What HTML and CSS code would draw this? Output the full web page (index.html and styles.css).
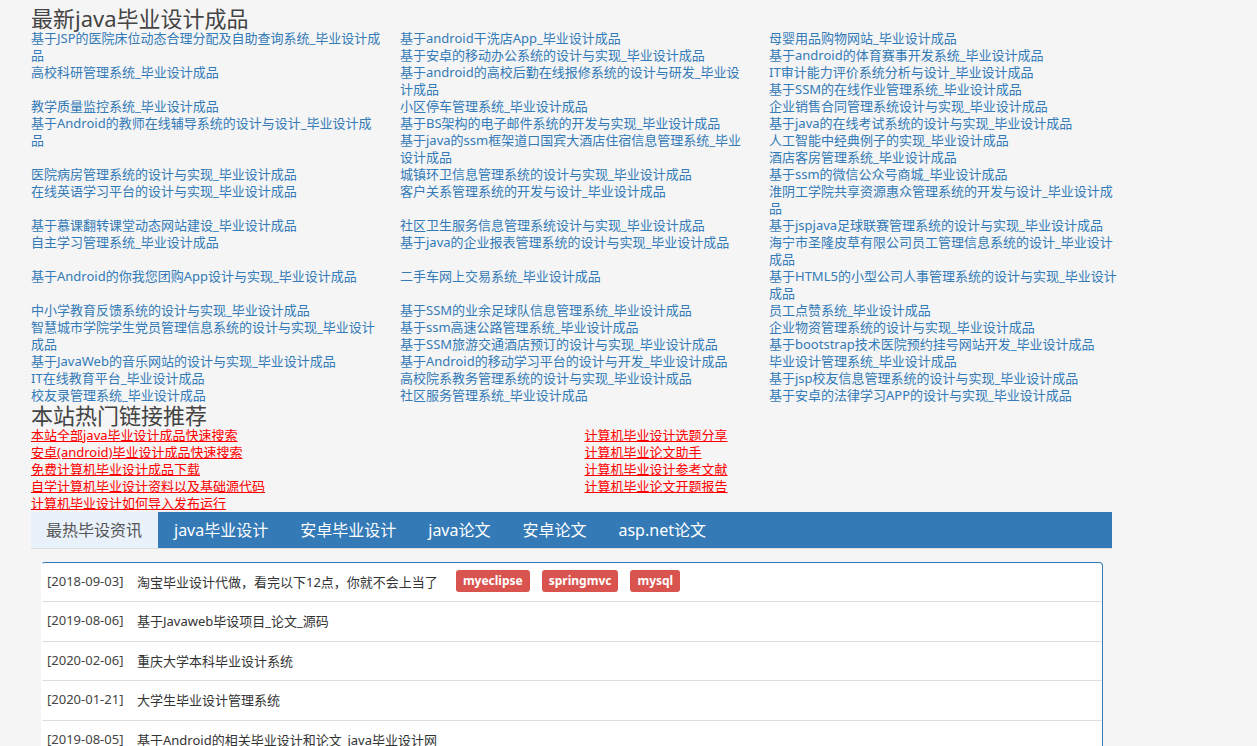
FILE: index.html
```html
<!DOCTYPE html>
<html lang="zh-CN">
<head>
<meta charset="utf-8">
<title>java毕业设计</title>
<link rel="stylesheet" href="styles.css">
</head>
<body>
<main class="container">
  <section>
    <h3 class="heading">最新java毕业设计成品</h3>
    <ul class="row thirds">
      <li><a href="#">基于JSP的医院床位动态合理分配及自助查询系统_毕业设计成<br>品</a></li>
      <li><a href="#">基于android干洗店App_毕业设计成品</a></li>
      <li><a href="#">母婴用品购物网站_毕业设计成品</a></li>
      <li><a href="#">基于安卓的移动办公系统的设计与实现_毕业设计成品</a></li>
      <li><a href="#">基于android的体育赛事开发系统_毕业设计成品</a></li>
      <li><a href="#">高校科研管理系统_毕业设计成品</a></li>
      <li><a href="#">基于android的高校后勤在线报修系统的设计与研发_毕业设<br>计成品</a></li>
      <li><a href="#">IT审计能力评价系统分析与设计_毕业设计成品</a></li>
      <li><a href="#">基于SSM的在线作业管理系统_毕业设计成品</a></li>
      <li><a href="#">教学质量监控系统_毕业设计成品</a></li>
      <li><a href="#">小区停车管理系统_毕业设计成品</a></li>
      <li><a href="#">企业销售合同管理系统设计与实现_毕业设计成品</a></li>
      <li><a href="#">基于Android的教师在线辅导系统的设计与设计_毕业设计成<br>品</a></li>
      <li><a href="#">基于BS架构的电子邮件系统的开发与实现_毕业设计成品</a></li>
      <li><a href="#">基于java的在线考试系统的设计与实现_毕业设计成品</a></li>
      <li><a href="#">基于java的ssm框架道口国宾大酒店住宿信息管理系统_毕业<br>设计成品</a></li>
      <li><a href="#">人工智能中经典例子的实现_毕业设计成品</a></li>
      <li><a href="#">酒店客房管理系统_毕业设计成品</a></li>
      <li><a href="#">医院病房管理系统的设计与实现_毕业设计成品</a></li>
      <li><a href="#">城镇环卫信息管理系统的设计与实现_毕业设计成品</a></li>
      <li><a href="#">基于ssm的微信公众号商城_毕业设计成品</a></li>
      <li><a href="#">在线英语学习平台的设计与实现_毕业设计成品</a></li>
      <li><a href="#">客户关系管理系统的开发与设计_毕业设计成品</a></li>
      <li><a href="#">淮阴工学院共享资源惠众管理系统的开发与设计_毕业设计成<br>品</a></li>
      <li><a href="#">基于慕课翻转课堂动态网站建设_毕业设计成品</a></li>
      <li><a href="#">社区卫生服务信息管理系统设计与实现_毕业设计成品</a></li>
      <li><a href="#">基于jspjava足球联赛管理系统的设计与实现_毕业设计成品</a></li>
      <li><a href="#">自主学习管理系统_毕业设计成品</a></li>
      <li><a href="#">基于java的企业报表管理系统的设计与实现_毕业设计成品</a></li>
      <li><a href="#">海宁市圣隆皮草有限公司员工管理信息系统的设计_毕业设计<br>成品</a></li>
      <li><a href="#">基于Android的你我您团购App设计与实现_毕业设计成品</a></li>
      <li><a href="#">二手车网上交易系统_毕业设计成品</a></li>
      <li><a href="#">基于HTML5的小型公司人事管理系统的设计与实现_毕业设计<br>成品</a></li>
      <li><a href="#">中小学教育反馈系统的设计与实现_毕业设计成品</a></li>
      <li><a href="#">基于SSM的业余足球队信息管理系统_毕业设计成品</a></li>
      <li><a href="#">员工点赞系统_毕业设计成品</a></li>
      <li><a href="#">智慧城市学院学生党员管理信息系统的设计与实现_毕业设计<br>成品</a></li>
      <li><a href="#">基于ssm高速公路管理系统_毕业设计成品</a></li>
      <li><a href="#">企业物资管理系统的设计与实现_毕业设计成品</a></li>
      <li><a href="#">基于SSM旅游交通酒店预订的设计与实现_毕业设计成品</a></li>
      <li><a href="#">基于bootstrap技术医院预约挂号网站开发_毕业设计成品</a></li>
      <li><a href="#">基于JavaWeb的音乐网站的设计与实现_毕业设计成品</a></li>
      <li><a href="#">基于Android的移动学习平台的设计与开发_毕业设计成品</a></li>
      <li><a href="#">毕业设计管理系统_毕业设计成品</a></li>
      <li><a href="#">IT在线教育平台_毕业设计成品</a></li>
      <li><a href="#">高校院系教务管理系统的设计与实现_毕业设计成品</a></li>
      <li><a href="#">基于jsp校友信息管理系统的设计与实现_毕业设计成品</a></li>
      <li><a href="#">校友录管理系统_毕业设计成品</a></li>
      <li><a href="#">社区服务管理系统_毕业设计成品</a></li>
      <li><a href="#">基于安卓的法律学习APP的设计与实现_毕业设计成品</a></li>
    </ul>
  </section>

  <section>
    <h3 class="heading">本站热门链接推荐</h3>
    <ul class="row halves">
      <li><a href="#">本站全部java毕业设计成品快速搜索</a></li>
      <li><a href="#">计算机毕业设计选题分享</a></li>
      <li><a href="#">安卓(android)毕业设计成品快速搜索</a></li>
      <li><a href="#">计算机毕业论文助手</a></li>
      <li><a href="#">免费计算机毕业设计成品下载</a></li>
      <li><a href="#">计算机毕业设计参考文献</a></li>
      <li><a href="#">自学计算机毕业设计资料以及基础源代码</a></li>
      <li><a href="#">计算机毕业论文开题报告</a></li>
      <li><a href="#">计算机毕业设计如何导入发布运行</a></li>
    </ul>
  </section>

  <nav class="tabs">
    <a class="tab active" href="#">最热毕设资讯</a>
    <a class="tab" href="#">java毕业设计</a>
    <a class="tab" href="#">安卓毕业设计</a>
    <a class="tab" href="#">java论文</a>
    <a class="tab" href="#">安卓论文</a>
    <a class="tab" href="#">asp.net论文</a>
  </nav>

  <ul class="panel">
    <li class="news">
      <span class="date">[2018-09-03]</span>
      <a class="title" href="#">淘宝毕业设计代做，看完以下12点，你就不会上当了</a>
      <span class="labels"><a class="label" href="#">myeclipse</a><a class="label" href="#">springmvc</a><a class="label" href="#">mysql</a></span>
    </li>
    <li class="news"><span class="date">[2019-08-06]</span><a class="title" href="#">基于Javaweb毕设项目_论文_源码</a></li>
    <li class="news"><span class="date">[2020-02-06]</span><a class="title" href="#">重庆大学本科毕业设计系统</a></li>
    <li class="news"><span class="date">[2020-01-21]</span><a class="title" href="#">大学生毕业设计管理系统</a></li>
    <li class="news"><span class="date">[2019-08-05]</span><a class="title" href="#">基于Android的相关毕业设计和论文_java毕业设计网</a></li>
  </ul>
</main>
</body>
</html>
```

FILE: styles.css
```css
* { box-sizing: border-box; }

body {
  margin: 0;
  height: 100vh;
  overflow: hidden;
  background: #f5f5f5;
  color: #444;
  font: 13px/17px "Noto Sans", "Noto Sans CJK SC", sans-serif;
}

ul { margin: 0; padding: 0; list-style: none; }
a { color: #337ab7; text-decoration: none; }

.container { width: 86%; margin-left: 31px; padding-top: 7px; }

.heading {
  margin: 0;
  font-size: 22px;
  font-weight: 400;
  line-height: 23px;
}

.row { display: flow-root; margin: 0 -13px; }
.row li { float: left; padding: 0 13px; white-space: nowrap; }
.row a { display: block; line-height: 17px; }
.thirds li { width: 33.333%; }
.halves li { width: 50%; }
.halves a { color: #f00; text-decoration: underline; }

.tabs {
  display: flex;
  background: #337ab7;
  border-bottom: 1px solid #ddd;
}
.tab {
  padding: 1px 16px 0;
  color: #fff;
  font-size: 16px;
  line-height: 35px;
}
.tab.active { padding-left: 15px; background: #e9f1fa; color: #555; }

.panel {
  margin: 13px 9px 0 10px;
  background: #fff;
  border: 1px solid #337ab7;
  border-left-color: #fff;
  border-radius: 4px;
}
.news {
  display: flex;
  align-items: center;
  height: 39px;
  padding-left: 5px;
  border-bottom: 1px solid #ddd;
}
.news:nth-child(even) { height: 40px; }
.date { width: 90px; padding-bottom: 2px; }
.title { color: #333; }
.labels { display: flex; gap: 12px; margin-left: 18px; padding-bottom: 2px; }
.label {
  padding: 0 7px;
  border-radius: 3px;
  background: #d9534f;
  color: #fff;
  font-size: 12px;
  font-weight: 700;
  line-height: 22px;
}
```
